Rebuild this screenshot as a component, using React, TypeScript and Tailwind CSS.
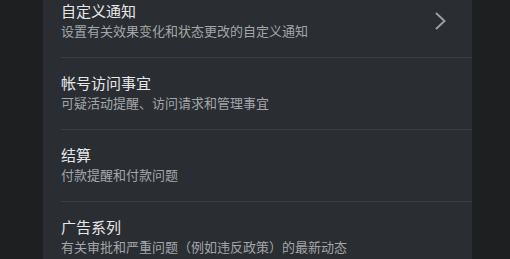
import React from "react";

const rows = [
  { title: "自定义通知", sub: "设置有关效果变化和状态更改的自定义通知", chevron: true },
  { title: "帐号访问事宜", sub: "可疑活动提醒、访问请求和管理事宜" },
  { title: "结算", sub: "付款提醒和付款问题" },
  { title: "广告系列", sub: "有关审批和严重问题（例如违反政策）的最新动态" },
];

export default function App() {
  return (
    <div
      className="w-[510px] h-[259px] overflow-hidden bg-[#1e1f21] pl-[43px]"
      style={{ fontFamily: '"Noto Sans CJK SC", "Noto Sans", sans-serif' }}
    >
      <div className="w-[429px] h-full bg-[#2a2d31] overflow-hidden">
        <div className="-mt-[14px] flex flex-col">
          {rows.map((r, i) => (
            <div key={i} className={i > 0 ? "ml-[18px] border-t border-[#3b3e42]" : "ml-[18px]"}>
              <div className="flex items-center pt-[15px] pb-[16px]">
                <div className="flex-1 flex flex-col">
                  <div className="text-[15px] leading-5 text-[#e6e7e9]">{r.title}</div>
                  <div className="text-[13px] leading-5 text-[#a3a6aa]">{r.sub}</div>
                </div>
                {r.chevron && (
                  <svg width="14" height="20" viewBox="0 0 14 20" className="mr-[24px]">
                    <polyline
                      points="2,2 10.5,10 2,18"
                      fill="none"
                      stroke="#9a9da1"
                      strokeWidth="2"
                    />
                  </svg>
                )}
              </div>
            </div>
          ))}
        </div>
      </div>
    </div>
  );
}
